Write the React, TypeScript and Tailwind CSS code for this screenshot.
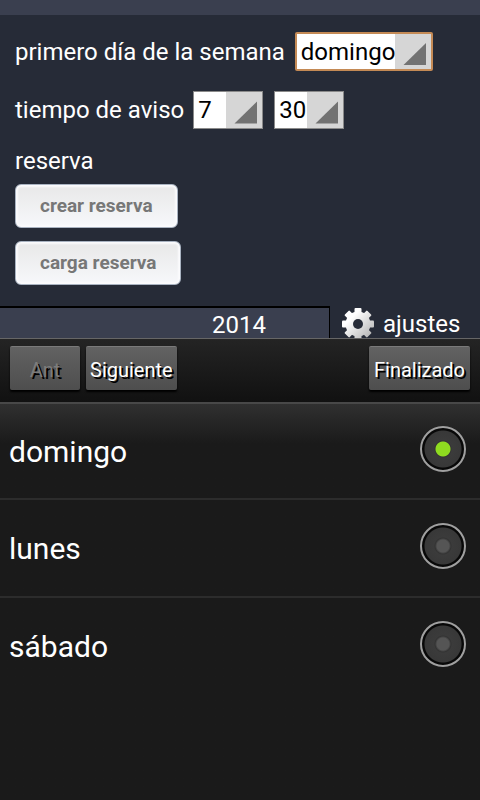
import { useState } from "react";

type PickerProps = {
  id: string;
  label: string;
  options: string[];
  value: string;
  onChange: (value: string) => void;
  className: string;
};

function Picker({ id, label, options, value, onChange, className }: PickerProps) {
  return (
    <span className={`relative flex bg-white ${className}`}>
      <select
        id={id}
        aria-label={label}
        value={value}
        onChange={(e) => onChange(e.target.value)}
        className="w-full appearance-none bg-transparent pl-1 text-2xl leading-8 text-black outline-none"
      >
        {options.map((option) => (
          <option key={option}>{option}</option>
        ))}
      </select>
      <span className="pointer-events-none absolute inset-y-0 right-0 w-9 bg-[#d6d6d6]">
        <svg viewBox="0 0 36 35" className="h-full w-full" aria-hidden="true">
          <path d="M8.500 31 L31 9 V31 Z" fill="#727272" />
        </svg>
      </span>
    </span>
  );
}

function BackupButton({ children }: { children: string }) {
  return (
    <button
      type="button"
      className="h-11 rounded-md border border-[#a9b3c1] bg-linear-to-b from-[#e8e8e8] to-[#f7f8fb] px-6 text-[19px] leading-6 font-bold text-[#777] shadow-[inset_0_0_2px_2px_#fbfbfd]"
    >
      {children}
    </button>
  );
}

const barButton =
  "h-11 rounded-xs border-t border-[#7a7a7a] bg-linear-to-b from-[#626262] to-[#4e4e4e] px-1 pt-0.5 text-xl leading-6 shadow-[0_2px_2px_#000] [text-shadow:2px_2px_0_#000]";

const days = ["domingo", "lunes", "sábado"];
const toothAngles = [0, 45, 90, 135, 180, 225, 270, 315];

function GearIcon() {
  return (
    <svg viewBox="0 0 32 32" className="size-8 shrink-0" aria-hidden="true">
      <defs>
        <linearGradient id="gear-fill" x1="0" y1="0" x2="1" y2="1">
          <stop offset="0.3" stopColor="#ffffff" />
          <stop offset="1" stopColor="#aaaaaa" />
        </linearGradient>
        <mask id="gear-shape">
          <circle cx="16" cy="16" r="12.500" fill="#fff" />
          {toothAngles.map((angle) => (
            <rect
              key={angle}
              x="12.500"
              y="0"
              width="7"
              height="8"
              rx="1"
              fill="#fff"
              transform={`rotate(${angle} 16 16)`}
            />
          ))}
          <circle cx="16" cy="16" r="5" fill="#000" />
        </mask>
      </defs>
      <rect width="32" height="32" fill="url(#gear-fill)" mask="url(#gear-shape)" />
    </svg>
  );
}

export default function App() {
  const [day, setDay] = useState("domingo");
  const [hour, setHour] = useState("7");
  const [minute, setMinute] = useState("30");

  return (
    <div className="flex min-h-screen flex-col bg-[#1a1a1a] font-[Roboto,sans-serif] text-white">
      <main className="bg-[#262b37]">
        <div className="h-[15px] bg-[#3a3f4f]" />
        <form className="flex flex-col items-start px-[15px] pt-[17px] pb-[21px] text-2xl leading-7">
          <div className="flex items-center gap-[10px]">
            <label htmlFor="first-day">primero día de la semana</label>
            <Picker
              id="first-day"
              label="primero día de la semana"
              options={days}
              value={day}
              onChange={setDay}
              className="h-[39px] w-[138px] rounded-xs border-2 border-[#c48a55]"
            />
          </div>
          <div className="mt-5 flex items-center">
            <label htmlFor="hour">tiempo de aviso</label>
            <Picker
              id="hour"
              label="hora de aviso"
              options={["7", "8", "9"]}
              value={hour}
              onChange={setHour}
              className="ml-[9px] h-[38px] w-[70px] border border-[#8a8a8a]"
            />
            <Picker
              id="minute"
              label="minuto de aviso"
              options={["00", "30"]}
              value={minute}
              onChange={setMinute}
              className="ml-[11px] h-[38px] w-[70px] border border-[#8a8a8a]"
            />
          </div>
          <h2 className="mt-[18px]">reserva</h2>
          <div className="mt-[9px] flex flex-col items-start gap-[13px]">
            <BackupButton>crear reserva</BackupButton>
            <BackupButton>carga reserva</BackupButton>
          </div>
        </form>
        <nav className="flex h-8 overflow-hidden text-2xl leading-7">
          <a href="#year" className="h-12 flex-1 border-t-2 border-r border-black bg-[#3a3f4f] pt-[3px] pr-[63px] text-right">
            2014
          </a>
          <a href="#settings" className="flex h-9 w-[150px] items-center gap-[9px] pl-3">
            <GearIcon />
            ajustes
          </a>
        </nav>
      </main>

      <div className="flex gap-1.5 border-t border-[#666] bg-linear-to-b from-[#242424] to-[#111] px-2.5 pt-[7px] pb-3">
        <button type="button" disabled className={`${barButton} w-[70px] text-[#7c7c7c]`}>
          Ant
        </button>
        <button type="button" className={barButton}>
          Siguiente
        </button>
        <button type="button" className={`${barButton} ml-auto w-[101px]`}>
          Finalizado
        </button>
      </div>

      <fieldset className="flex-1 border-t-2 border-[#484848] bg-linear-to-b from-[#303030] to-[#1a1a1a] to-[40px]">
        {days.map((name) => (
          <label
            key={name}
            className="flex h-[98px] items-center justify-between border-b-2 border-[#2c2c2c] pt-px pr-3.5 pl-[9px] text-[30px] leading-9 first:h-24 last:border-transparent"
          >
            {name}
            <input
              type="radio"
              name="day"
              checked={day === name}
              onChange={() => setDay(name)}
              className="mb-1.5 size-[46px] appearance-none rounded-full border-2 border-[#a0a0a0] bg-[radial-gradient(circle,#555_6px,#333_8px,#3b3b3b_9px,#383838_18px,#080808_19px)] checked:bg-[radial-gradient(circle,#8fdc20_7px,#333_8px,#3b3b3b_9px,#383838_18px,#080808_19px)]"
            />
          </label>
        ))}
      </fieldset>
    </div>
  );
}
